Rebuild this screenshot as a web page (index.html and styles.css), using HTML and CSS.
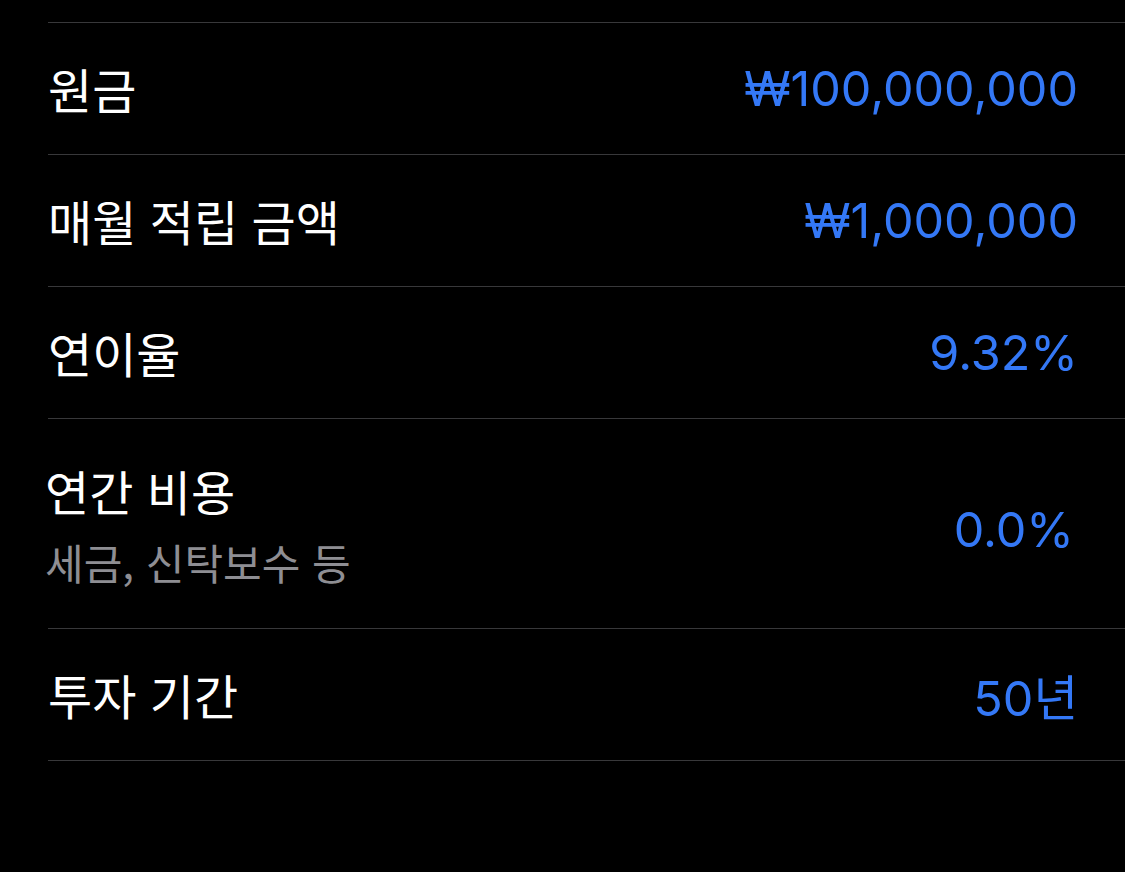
FILE: index.html
```html
<!DOCTYPE html>
<html lang="ko">
<head>
  <meta charset="UTF-8">
  <title>적립식 투자 계산</title>
  <link rel="stylesheet" href="styles.css">
</head>
<body>

  <div class="settings">
    <div class="row">
      <div class="label">원금</div>
      <div class="value">₩100,000,000</div>
    </div>
    <div class="row">
      <div class="label">매월 적립 금액</div>
      <div class="value">₩1,000,000</div>
    </div>
    <div class="row">
      <div class="label">연이율</div>
      <div class="value">9.32%</div>
    </div>
    <div class="row tall">
      <div class="label">
        연간 비용
        <div class="sub">세금, 신탁보수 등</div>
      </div>
      <div class="value">0.0%</div>
    </div>
    <div class="row">
      <div class="label">투자 기간</div>
      <div class="value">50년</div>
    </div>
  </div>

</body>
</html>
```

FILE: styles.css
```css
body {
  margin: 0;
  background: #000;
  color: #fff;
  font-family: Inter, 'Noto Sans CJK KR', sans-serif;
}

.settings {
  margin-top: 22px;
  margin-left: 48px;
  border-top: 1px solid #38383a;
}

.row {
  display: flex;
  justify-content: space-between;
  align-items: center;
  height: 131px;
  padding-right: 47px;
  border-bottom: 1px solid #38383a;
}

.label {
  font-family: 'Noto Sans CJK KR', sans-serif;
  font-size: 48px;
  line-height: 1.2;
}

.value {
  font-size: 48.5px;
  color: #3478f6;
}

.row.tall {
  height: 209px;
}

.row.tall .label {
  margin-left: -3px;
  padding-top: 2px;
}

.row.tall .value {
  margin-right: 4px;
  padding-top: 12px;
}

.sub {
  margin-top: 18px;
  font-size: 42px;
  line-height: 1.2;
  color: #8e8e93;
}
```
